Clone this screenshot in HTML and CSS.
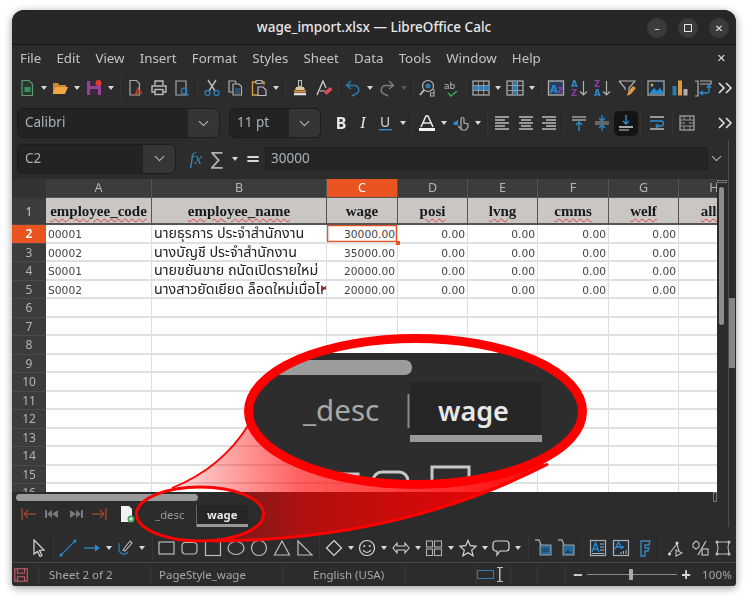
FILE: index.html
```html
<!DOCTYPE html>
<html lang="en">
<head>
<meta charset="utf-8">
<title>wage_import.xlsx — LibreOffice Calc</title>
<link rel="stylesheet" href="styles.css">
</head>
<body>
<svg class="defs" width="0" height="0">
<symbol id="new" viewBox="0 0 18 18"><path d="M4 1.500h7l3.500 3.500v11.500H4z" fill="#28382e" stroke="#5f9a72" stroke-width="1.200"/><rect x="6.500" y="8" width="6" height="5" fill="#37905a"/></symbol>
<symbol id="open" viewBox="0 0 18 18"><path d="M2 14V4h5l1.500 2H15v2H6z" fill="#c98a34"/><path d="M1.500 15l3-7H17l-3 7z" fill="#f3a645"/></symbol>
<symbol id="save" viewBox="0 0 18 18"><path d="M2 2h14v14H2z" fill="#9c3f9a"/><rect x="5" y="2" width="7" height="5" fill="#3b2a3b"/><rect x="5" y="10" width="8" height="6" fill="#3b2a3b"/><circle cx="13.500" cy="4" r="3" fill="#e23b2e"/></symbol>
<symbol id="pdf" viewBox="0 0 18 18"><path d="M4 1.500h6.500l3 3V16H4z" fill="none" stroke="#a8a8a8" stroke-width="1.200"/><path d="M8 17l3-5 1-3 1 3 3 2-5-.5z" fill="none" stroke="#c9402d" stroke-width="1.200"/></symbol>
<symbol id="print" viewBox="0 0 18 18"><path d="M5 6V2h8v4M5 13H2V7h14v6h-3" fill="none" stroke="#bcbcbc" stroke-width="1.400"/><rect x="5" y="10.500" width="8" height="5" fill="none" stroke="#bcbcbc" stroke-width="1.400"/></symbol>
<symbol id="prev" viewBox="0 0 18 18"><path d="M3 2h10v14H3z" fill="none" stroke="#a8a8a8" stroke-width="1.200"/><circle cx="11" cy="12" r="2.800" fill="none" stroke="#2a7cb6" stroke-width="1.400"/><path d="M13 14l2.500 2.500" stroke="#2a7cb6" stroke-width="1.500"/></symbol>
<symbol id="cut" viewBox="0 0 18 18"><path d="M5 1l7 11M13 1L6 12" stroke="#bcbcbc" stroke-width="1.400"/><circle cx="4.500" cy="14" r="2.500" fill="none" stroke="#2a7cb6" stroke-width="1.300"/><circle cx="13.500" cy="14" r="2.500" fill="none" stroke="#2a7cb6" stroke-width="1.300"/></symbol>
<symbol id="copy" viewBox="0 0 18 18"><path d="M3 2h6l1 1v10H3z" fill="#2c2c2c" stroke="#b0b0b0" stroke-width="1.200"/><path d="M7 5h6l2.500 2.500V16H7z" fill="#2c2c2c" stroke="#b0b0b0" stroke-width="1.200"/><path d="M9 10h5M9 12h5M9 14h5" stroke="#2a7cb6" stroke-width="1.100"/></symbol>
<symbol id="paste" viewBox="0 0 18 18"><path d="M6 3H2.500v13H8M12 3h2v3" fill="none" stroke="#d99a45" stroke-width="1.400"/><rect x="6" y="1.500" width="6" height="3" fill="none" stroke="#b0b0b0" stroke-width="1.100"/><path d="M8 8h5l3 3v5.500H8z" fill="none" stroke="#bcbcbc" stroke-width="1.200"/></symbol>
<symbol id="brush" viewBox="0 0 18 18"><rect x="7.500" y="1.500" width="3" height="6" fill="none" stroke="#bcbcbc" stroke-width="1.100"/><path d="M5 8h8l1 3H4z" fill="#e2c6a0"/><rect x="3" y="11.500" width="12" height="1.800" fill="#e0993f"/><rect x="3" y="13.800" width="12" height="2.500" fill="#dcdcdc"/></symbol>
<symbol id="clear" viewBox="0 0 18 18"><path d="M2 16L8 2l3 7" fill="none" stroke="#c8c8c8" stroke-width="1.400"/><path d="M5 12h5" stroke="#c8c8c8" stroke-width="1.200"/><path d="M9 13l6-5 2.500 2.500-6 5.500z" fill="#df4a58"/></symbol>
<symbol id="undo" viewBox="0 0 18 18"><path d="M3 6.500h8a4.500 4.500 0 0 1 2 8l-5 2.500M7 2L2.500 6.500 7 10" fill="none" stroke="#2a7cb6" stroke-width="1.400"/></symbol>
<symbol id="redo" viewBox="0 0 18 18"><path d="M15 6.500H7a4.500 4.500 0 0 0-2 8l5 2.500M11 2l4.500 4.500L11 10" fill="none" stroke="#7c7c7c" stroke-width="1.400"/></symbol>
<symbol id="find" viewBox="0 0 18 18"><circle cx="9" cy="7" r="5.500" fill="none" stroke="#bcbcbc" stroke-width="1.200"/><path d="M5 11l-4 5" stroke="#bcbcbc" stroke-width="1.800"/><circle cx="9" cy="7" r="2.500" fill="#2a7cb6"/><path d="M15 10v7h-3.500v-3H15" fill="none" stroke="#b0b0b0" stroke-width="1.100"/></symbol>
<symbol id="trow" viewBox="0 0 18 18"><rect x="1" y="2" width="16" height="14" fill="none" stroke="#a0a0a0" stroke-width="1.400"/><rect x="1.500" y="6.500" width="15" height="5" fill="#2a7cb6"/><path d="M6.300 2v14M11.600 2v14M1 6.500h16M1 11.500h16" stroke="#a0a0a0" stroke-width=".9"/></symbol>
<symbol id="tcol" viewBox="0 0 18 18"><rect x="1" y="2" width="16" height="14" fill="none" stroke="#a0a0a0" stroke-width="1.400"/><rect x="6.500" y="2.500" width="5" height="13" fill="#2a7cb6"/><path d="M6.300 2v14M11.600 2v14M1 6.500h16M1 11.500h16" stroke="#a0a0a0" stroke-width=".9"/></symbol>
<symbol id="filter" viewBox="0 0 18 18"><path d="M1 2h16l-6 7v3M7 11V9L1 2" fill="none" stroke="#b0b0b0" stroke-width="1.200"/><path d="M15 7l-5 6-1 4 4-2 5-6z" fill="#dd9a42"/></symbol>
<symbol id="img" viewBox="0 0 18 18"><rect x="1" y="2" width="16" height="14" fill="#1f2e3b" stroke="#b0b0b0" stroke-width="1.200"/><path d="M2 15l5-6 3 3 3-3 3 4v2z" fill="#2a8ad0"/><circle cx="5" cy="6" r="1.500" fill="#e0993f"/></symbol>
<symbol id="chart" viewBox="0 0 18 18"><rect x="1.500" y="7" width="4" height="9.500" fill="#2a7cb6"/><rect x="7" y="1.500" width="4" height="15" fill="#e0993f"/><rect x="12.500" y="10" width="4" height="6.500" fill="#b0b0b0"/></symbol>
<symbol id="pivot" viewBox="0 0 18 18"><path d="M1 2h3v15H1M6 2h11v3H6" fill="none" stroke="#b0b0b0" stroke-width="1.200"/><path d="M15 7v5a2 2 0 0 1-2 2H7M13 9l2-3 2 3M9 12l-3 2 3 2" fill="none" stroke="#2a8ad0" stroke-width="1.300"/></symbol>
<symbol id="more" viewBox="0 0 18 18"><path d="M3 4l5 5-5 5M10 4l5 5-5 5" fill="none" stroke="#d8d8d8" stroke-width="1.700"/></symbol>
<symbol id="fcol" viewBox="0 0 18 18"><path d="M3 13L8 2h2l5 11M5 9h8" fill="none" stroke="#e6e6e6" stroke-width="1.600"/><rect x="1" y="14" width="16" height="3" fill="#f2f2f2"/></symbol>
<symbol id="hl" viewBox="0 0 18 18"><path d="M1 9l5-3v5H2z" fill="#2a8ad0"/><path d="M9 15V5a1.500 1.500 0 0 1 3 0v4l4 1v3l-2 3H10l-4-4" fill="none" stroke="#b0b0b0" stroke-width="1.200"/></symbol>
<symbol id="al" viewBox="0 0 18 18"><path d="M2 3h14M2 6h10M2 9h14M2 12h10M2 15h14" stroke="#bcbcbc" stroke-width="1.400"/></symbol>
<symbol id="ac" viewBox="0 0 18 18"><path d="M2 3h14M4 6h10M2 9h14M4 12h10M2 15h14" stroke="#bcbcbc" stroke-width="1.400"/></symbol>
<symbol id="ar" viewBox="0 0 18 18"><path d="M2 3h14M6 6h10M2 9h14M6 12h10M2 15h14" stroke="#bcbcbc" stroke-width="1.400"/></symbol>
<symbol id="vt" viewBox="0 0 18 18"><path d="M2 3h14M2 6h14" stroke="#a0a0a0" stroke-width="1.300"/><path d="M9 8v9M6 11l3-3 3 3" fill="none" stroke="#2a8ad0" stroke-width="1.400"/></symbol>
<symbol id="vm" viewBox="0 0 18 18"><path d="M2 8h14M2 10h14" stroke="#a0a0a0" stroke-width="1.200"/><path d="M9 1v6M6 4l3 3 3-3M9 17v-6M6 14l3-3 3 3" fill="none" stroke="#2a8ad0" stroke-width="1.300"/></symbol>
<symbol id="vb" viewBox="0 0 18 18"><path d="M9 1v9M6 7l3 3 3-3" fill="none" stroke="#2a8ad0" stroke-width="1.400"/><path d="M2 13h14" stroke="#e6e6e6" stroke-width="1.400"/><path d="M2 16h10" stroke="#a0a0a0" stroke-width="1.300"/></symbol>
<symbol id="wrap" viewBox="0 0 18 18"><path d="M2 3h14M2 15h14" stroke="#bcbcbc" stroke-width="1.300"/><path d="M2 7h11a2 2 0 0 1 0 5H8M10 10l-2 2 2 2" fill="none" stroke="#2a8ad0" stroke-width="1.300"/></symbol>
<symbol id="merge" viewBox="0 0 18 18"><rect x="2" y="2" width="14" height="14" fill="none" stroke="#a0a0a0" stroke-width="1.300"/><path d="M2 6h14M2 12h14M6 2v4M12 2v4M6 12v4M12 12v4M2 9h5M11 9h5" stroke="#a0a0a0" stroke-width=".9"/></symbol>
<symbol id="cursor" viewBox="0 0 18 18"><path d="M4 1l10 10-4.500 .5 2.500 5-2 1-2.500-5L4 15z" fill="none" stroke="#d8d8d8" stroke-width="1.200"/></symbol>
<symbol id="line" viewBox="0 0 18 18"><path d="M2 16L16 2" stroke="#2a7cb6" stroke-width="1.300"/><circle cx="2" cy="16" r="1.600" fill="#2a8ad0"/><circle cx="16" cy="2" r="1.600" fill="#2a8ad0"/></symbol>
<symbol id="arrow" viewBox="0 0 18 18"><path d="M1 9h13" stroke="#2a7cb6" stroke-width="1.300"/><path d="M12 5.500L17 9l-5 3.500z" fill="#2a8ad0"/></symbol>
<symbol id="curve" viewBox="0 0 18 18"><path d="M3 4v7a5 5 0 0 0 9 2" fill="none" stroke="#2a7cb6" stroke-width="1.300"/><path d="M7 11l7-9 2 2-7 8z" fill="none" stroke="#bcbcbc" stroke-width="1.100"/></symbol>
<symbol id="rect" viewBox="0 0 18 18"><rect x="1" y="3" width="15" height="12" fill="none" stroke="#bcbcbc" stroke-width="1.200"/></symbol>
<symbol id="rrect" viewBox="0 0 18 18"><rect x="1" y="3.500" width="15" height="11.500" rx="3.500" fill="none" stroke="#bcbcbc" stroke-width="1.200"/></symbol>
<symbol id="sq" viewBox="0 0 18 18"><rect x="1.500" y="1.500" width="15" height="15" fill="none" stroke="#bcbcbc" stroke-width="1.200"/></symbol>
<symbol id="ell" viewBox="0 0 18 18"><ellipse cx="9" cy="9" rx="8" ry="6.500" fill="none" stroke="#bcbcbc" stroke-width="1.200"/></symbol>
<symbol id="circ" viewBox="0 0 18 18"><circle cx="9" cy="9" r="7.500" fill="none" stroke="#bcbcbc" stroke-width="1.200"/></symbol>
<symbol id="tri" viewBox="0 0 18 18"><path d="M9 2l7.500 14h-15z" fill="none" stroke="#bcbcbc" stroke-width="1.200"/></symbol>
<symbol id="rtri" viewBox="0 0 18 18"><path d="M2 2l14 14H2z" fill="none" stroke="#bcbcbc" stroke-width="1.200"/></symbol>
<symbol id="dia" viewBox="0 0 18 18"><path d="M9 1.500L16.500 9 9 16.500 1.500 9z" fill="none" stroke="#d8d8d8" stroke-width="1.200"/></symbol>
<symbol id="smile" viewBox="0 0 18 18"><circle cx="9" cy="9" r="7.500" fill="none" stroke="#d8d8d8" stroke-width="1.200"/><circle cx="6.300" cy="7" r="1" fill="#d8d8d8"/><circle cx="11.700" cy="7" r="1" fill="#d8d8d8"/><path d="M5 11a4.500 4.500 0 0 0 8 0" fill="none" stroke="#d8d8d8" stroke-width="1.100"/></symbol>
<symbol id="dbl" viewBox="0 0 18 18"><path d="M5 4L1 9l4 5v-3h8v3l4-5-4-5v3H5z" fill="none" stroke="#d0d0d0" stroke-width="1.100"/></symbol>
<symbol id="flow" viewBox="0 0 18 18"><rect x="1.500" y="2" width="6" height="6" fill="none" stroke="#b0b0b0" stroke-width="1.100"/><rect x="9.500" y="2" width="7" height="6" fill="none" stroke="#b0b0b0" stroke-width="1.100"/><rect x="1.500" y="10" width="6" height="6.500" fill="none" stroke="#b0b0b0" stroke-width="1.100"/><rect x="9.500" y="10" width="7" height="6.500" fill="none" stroke="#b0b0b0" stroke-width="1.100"/></symbol>
<symbol id="star" viewBox="0 0 18 18"><path d="M9 1.500l2.300 5.200 5.700.6-4.300 3.800 1.300 5.600L9 13.800l-5 2.900 1.300-5.600L1 7.300l5.700-.6z" fill="none" stroke="#d8d8d8" stroke-width="1.200"/></symbol>
<symbol id="call" viewBox="0 0 18 18"><path d="M4 2h10a3 3 0 0 1 3 3v4a3 3 0 0 1-3 3H8l-3 4v-4H4a3 3 0 0 1-3-3V5a3 3 0 0 1 3-3z" fill="none" stroke="#d8d8d8" stroke-width="1.200"/></symbol>
<symbol id="fl1" viewBox="0 0 18 18"><path d="M1 1h4l2 5v8" fill="none" stroke="#a0a0a0" stroke-width="1.400"/><rect x="6" y="6" width="11" height="10" fill="#24689a" stroke="#a0a0a0"/><path d="M8 10h7M8 12h7" stroke="#1b3a54" stroke-width="1"/></symbol>
<symbol id="fl2" viewBox="0 0 18 18"><path d="M1 1h4l2 5v8" fill="none" stroke="#a0a0a0" stroke-width="1.400"/><rect x="6" y="6" width="11" height="10" fill="#24689a" stroke="#a0a0a0"/><path d="M8 14l3-3 3 3z" fill="#1b3a54"/></symbol>
<symbol id="tb1" viewBox="0 0 18 18"><rect x="1.500" y="1.500" width="15" height="15" fill="#232f3a" stroke="#b0b0b0" stroke-width="1.200"/><path d="M3 13L6.500 4 10 13M4.500 10h4" fill="none" stroke="#2a8ad0" stroke-width="1.400"/><path d="M11 5h4M11 8h4M11 11h4M3 14.500h12" stroke="#b0b0b0"/></symbol>
<symbol id="tb2" viewBox="0 0 18 18"><rect x="1.500" y="1.500" width="15" height="15" fill="#232f3a" stroke="#b0b0b0" stroke-width="1.200"/><path d="M3 10L6.500 3 10 10M4 8h8" fill="none" stroke="#2a8ad0" stroke-width="1.400"/><path d="M9 15v-2M11.500 15v-3M14 15v-4" stroke="#b0b0b0"/></symbol>
<symbol id="font3" viewBox="0 0 18 18"><path d="M5 17V2h9l-1 4H9v3h4l-1 3H9v5z" fill="none" stroke="#3a86bb" stroke-width="1.400"/></symbol>
<symbol id="pts" viewBox="0 0 18 18"><path d="M2 15l8-10 2 7" fill="none" stroke="#bcbcbc" stroke-width="1.100"/><path d="M9 11l6 3-6 3z" fill="none" stroke="#bcbcbc" stroke-width="1.100"/><circle cx="2.500" cy="15" r="1.500" fill="#d8d8d8"/><circle cx="10" cy="4" r="1.500" fill="#d8d8d8"/></symbol>
<symbol id="pct" viewBox="0 0 18 18"><path d="M2 5l3-3 3 2v4l-3 2-3-2z" fill="none" stroke="#bcbcbc" stroke-width="1.100"/><path d="M15 2L7 16" stroke="#bcbcbc" stroke-width="1.300"/><rect x="11" y="10" width="6" height="6" fill="none" stroke="#bcbcbc" stroke-width="1.200"/></symbol>
<symbol id="box3" viewBox="0 0 18 18"><path d="M3 3h12l-1 5 1 7H3l1-6z" fill="none" stroke="#bcbcbc" stroke-width="1.100"/><circle cx="3" cy="3" r="1.500" fill="#bcbcbc"/><circle cx="15" cy="3" r="1.500" fill="#bcbcbc"/><circle cx="3" cy="15" r="1.500" fill="#bcbcbc"/><circle cx="15" cy="15" r="1.500" fill="#bcbcbc"/></symbol>
<symbol id="first" viewBox="0 0 18 18"><path d="M2 3v12" stroke="#96452c" stroke-width="1.400"/><path d="M16 9H4M8 5L4 9l4 4" fill="none" stroke="#96452c" stroke-width="1.400"/></symbol>
<symbol id="last" viewBox="0 0 18 18"><path d="M16 3v12" stroke="#96452c" stroke-width="1.400"/><path d="M2 9h12M10 5l4 4-4 4" fill="none" stroke="#96452c" stroke-width="1.400"/></symbol>
<symbol id="pv" viewBox="0 0 18 18"><path d="M2 5v8h2V5zM9 5L4 9l5 4zM15 5L9 9l6 4z" fill="#777"/></symbol>
<symbol id="nx" viewBox="0 0 18 18"><path d="M16 5v8h-2V5zM9 5l5 4-5 4zM3 5l6 4-6 4z" fill="#777"/></symbol>
<symbol id="nsheet" viewBox="0 0 18 18"><path d="M3 1h8l3 3v13H3z" fill="#f2f2f2"/><circle cx="13" cy="14" r="3.500" fill="#3fa35f"/><path d="M11 14h4M13 12v4" stroke="#fff" stroke-width="1"/></symbol>
<symbol id="fsave" viewBox="0 0 18 18"><path d="M2 2h14v14H2z" fill="#3a2a2c" stroke="#c8636e" stroke-width="1.200"/><path d="M5 2v5h8V2M5 16v-5h8v5" fill="none" stroke="#c8636e" stroke-width="1.100"/></symbol>
</svg>

<div class="window">
  <header class="title">
    <span class="title-text">wage_import.xlsx — LibreOffice Calc</span>
    <div class="wbtns">
      <span class="wbtn">–</span>
      <span class="wbtn"><span class="sq-glyph"></span></span>
      <span class="wbtn">✕</span>
    </div>
  </header>
  <nav class="menu">
    <span>File</span><span>Edit</span><span>View</span><span>Insert</span><span>Format</span><span>Styles</span><span>Sheet</span><span>Data</span><span>Tools</span><span>Window</span><span>Help</span>
    <span class="menu-x">✕</span>
  </nav>

  <div class="tb tb-std">
    <svg class="i"><use href="#new"/></svg><i class="a"></i>
    <svg class="i"><use href="#open"/></svg><i class="a"></i>
    <svg class="i"><use href="#save"/></svg><i class="a"></i><b class="s"></b>
    <svg class="i"><use href="#pdf"/></svg><svg class="i"><use href="#print"/></svg><svg class="i"><use href="#prev"/></svg><b class="s"></b>
    <svg class="i"><use href="#cut"/></svg><svg class="i"><use href="#copy"/></svg><svg class="i"><use href="#paste"/></svg><i class="a"></i><b class="s"></b>
    <svg class="i"><use href="#brush"/></svg><svg class="i"><use href="#clear"/></svg><b class="s"></b>
    <svg class="i"><use href="#undo"/></svg><i class="a"></i>
    <svg class="i"><use href="#redo"/></svg><i class="a off"></i><b class="s"></b>
    <svg class="i"><use href="#find"/></svg>
    <svg class="i" viewBox="0 0 18 18"><text x="1" y="10" class="ic-t">ab</text><path d="M5 14l3 3 6-5" fill="none" stroke="#3fa35f" stroke-width="1.500"/></svg><b class="s"></b>
    <svg class="i"><use href="#trow"/></svg><i class="a"></i>
    <svg class="i"><use href="#tcol"/></svg><i class="a"></i><b class="s"></b>
    <svg class="i" viewBox="0 0 18 18"><rect x="1.500" y="2" width="15" height="14" fill="#243f57" stroke="#a8a8a8" stroke-width="1.400"/><text x="3" y="14" class="ic-az">A</text><text x="10" y="14" class="ic-az ic-p">z</text></svg>
    <svg class="i" viewBox="0 0 18 18"><text x="0" y="8" class="ic-s ic-b">A</text><text x="0" y="17" class="ic-s ic-p">Z</text><path d="M12.500 2v14M9 12.500l3.500 3.500 3.500-3.500" fill="none" stroke="#b0b0b0" stroke-width="1.200"/></svg>
    <svg class="i" viewBox="0 0 18 18"><text x="0" y="8" class="ic-s ic-p">Z</text><text x="0" y="17" class="ic-s ic-b">A</text><path d="M12.500 2v14M9 12.500l3.500 3.500 3.500-3.500" fill="none" stroke="#b0b0b0" stroke-width="1.200"/></svg>
    <svg class="i"><use href="#filter"/></svg><b class="s"></b>
    <svg class="i"><use href="#img"/></svg><svg class="i"><use href="#chart"/></svg><svg class="i"><use href="#pivot"/></svg>
    <svg class="i end"><use href="#more"/></svg>
  </div>

  <div class="tb tb-font">
    <div class="combo combo-font"><span class="combo-v">Calibri</span><span class="combo-b"><i class="chev"></i></span></div>
    <div class="combo combo-size"><span class="combo-v">11 pt</span><span class="combo-b"><i class="chev"></i></span></div>
    <span class="gl gl-b">B</span><span class="gl gl-i">I</span>
    <svg class="i" viewBox="0 0 18 18"><text x="3" y="13" class="ic-u">U</text><rect x="2" y="15" width="13" height="1.400" fill="#2a8ad0"/></svg><i class="a"></i><b class="s"></b>
    <svg class="i"><use href="#fcol"/></svg><i class="a"></i>
    <svg class="i"><use href="#hl"/></svg><i class="a"></i><b class="s"></b>
    <svg class="i"><use href="#al"/></svg><svg class="i"><use href="#ac"/></svg><svg class="i"><use href="#ar"/></svg><b class="s"></b>
    <svg class="i"><use href="#vt"/></svg><svg class="i"><use href="#vm"/></svg>
    <span class="active"><svg class="i"><use href="#vb"/></svg></span><b class="s s-w"></b>
    <svg class="i"><use href="#wrap"/></svg><b class="s"></b><svg class="i"><use href="#merge"/></svg>
    <svg class="i end"><use href="#more"/></svg>
  </div>

  <div class="tb tb-formula">
    <div class="combo combo-name"><span class="combo-v">C2</span><span class="combo-b"><i class="chev"></i></span></div>
    <span class="fx">fx</span><span class="sigma">∑</span><i class="a"></i><span class="eq">=</span>
    <div class="input">30000</div>
    <i class="chev chev-input"></i>
  </div>

  <main class="sheet">
    <div class="grid">
      <div class="row row-col">
        <div class="rh"></div><div class="ch">A</div><div class="ch">B</div><div class="ch ch-on">C</div><div class="ch">D</div><div class="ch">E</div><div class="ch">F</div><div class="ch">G</div><div class="ch">H</div>
      </div>
      <div class="row row-head">
        <div class="rh">1</div>
        <div class="hc"><u>employee_code</u></div><div class="hc"><u>employee_name</u></div><div class="hc">wage</div><div class="hc"><u>posi</u></div><div class="hc"><u>lvng</u></div><div class="hc"><u>cmms</u></div><div class="hc"><u>welf</u></div><div class="hc"><u>allw</u></div>
      </div>
      <div class="row">
        <div class="rh rh-on">2</div><div class="c">00001</div><div class="c th">นายธุรการ ประจำสำนักงาน</div><div class="c n sel">30000.00</div><div class="c n">0.00</div><div class="c n">0.00</div><div class="c n">0.00</div><div class="c n">0.00</div><div class="c"></div>
      </div>
      <div class="row">
        <div class="rh">3</div><div class="c">00002</div><div class="c th">นางบัญชี ประจำสำนักงาน</div><div class="c n">35000.00</div><div class="c n">0.00</div><div class="c n">0.00</div><div class="c n">0.00</div><div class="c n">0.00</div><div class="c"></div>
      </div>
      <div class="row">
        <div class="rh">4</div><div class="c">S0001</div><div class="c th">นายขยันขาย ถนัดเปิดรายใหม่</div><div class="c n">20000.00</div><div class="c n">0.00</div><div class="c n">0.00</div><div class="c n">0.00</div><div class="c n">0.00</div><div class="c"></div>
      </div>
      <div class="row">
        <div class="rh">5</div><div class="c">S0002</div><div class="c th ovf">นางสาวยัดเยียด ล็อดใหม่เมื่อไหร่</div><div class="c n">20000.00</div><div class="c n">0.00</div><div class="c n">0.00</div><div class="c n">0.00</div><div class="c n">0.00</div><div class="c"></div>
      </div>
      <div class="row"><div class="rh">6</div><div class="c"></div><div class="c"></div><div class="c"></div><div class="c"></div><div class="c"></div><div class="c"></div><div class="c"></div><div class="c"></div></div>
      <div class="row"><div class="rh">7</div><div class="c"></div><div class="c"></div><div class="c"></div><div class="c"></div><div class="c"></div><div class="c"></div><div class="c"></div><div class="c"></div></div>
      <div class="row"><div class="rh">8</div><div class="c"></div><div class="c"></div><div class="c"></div><div class="c"></div><div class="c"></div><div class="c"></div><div class="c"></div><div class="c"></div></div>
      <div class="row"><div class="rh">9</div><div class="c"></div><div class="c"></div><div class="c"></div><div class="c"></div><div class="c"></div><div class="c"></div><div class="c"></div><div class="c"></div></div>
      <div class="row"><div class="rh">10</div><div class="c"></div><div class="c"></div><div class="c"></div><div class="c"></div><div class="c"></div><div class="c"></div><div class="c"></div><div class="c"></div></div>
      <div class="row"><div class="rh">11</div><div class="c"></div><div class="c"></div><div class="c"></div><div class="c"></div><div class="c"></div><div class="c"></div><div class="c"></div><div class="c"></div></div>
      <div class="row"><div class="rh">12</div><div class="c"></div><div class="c"></div><div class="c"></div><div class="c"></div><div class="c"></div><div class="c"></div><div class="c"></div><div class="c"></div></div>
      <div class="row"><div class="rh">13</div><div class="c"></div><div class="c"></div><div class="c"></div><div class="c"></div><div class="c"></div><div class="c"></div><div class="c"></div><div class="c"></div></div>
      <div class="row"><div class="rh">14</div><div class="c"></div><div class="c"></div><div class="c"></div><div class="c"></div><div class="c"></div><div class="c"></div><div class="c"></div><div class="c"></div></div>
      <div class="row"><div class="rh">15</div><div class="c"></div><div class="c"></div><div class="c"></div><div class="c"></div><div class="c"></div><div class="c"></div><div class="c"></div><div class="c"></div></div>
      <div class="row"><div class="rh">16</div><div class="c"></div><div class="c"></div><div class="c"></div><div class="c"></div><div class="c"></div><div class="c"></div><div class="c"></div><div class="c"></div></div>
    </div>
    <div class="vscroll"><span class="vgrip"></span><span class="vthumb"></span></div>
    <div class="deck"><span class="deck-grip"></span></div>
  </main>

  <div class="tabs">
    <div class="hscroll"><span class="hthumb"></span><span class="hgrip"></span></div>
    <div class="tab-row">
      <svg class="i"><use href="#first"/></svg><svg class="i"><use href="#pv"/></svg><svg class="i"><use href="#nx"/></svg><svg class="i"><use href="#last"/></svg>
      <svg class="i i-new"><use href="#nsheet"/></svg>
      <span class="tab">_desc</span><span class="tab tab-on">wage</span>
    </div>
  </div>

  <div class="tb tb-draw">
    <svg class="i"><use href="#cursor"/></svg><b class="s"></b>
    <svg class="i"><use href="#line"/></svg><svg class="i"><use href="#arrow"/></svg><i class="a"></i>
    <svg class="i"><use href="#curve"/></svg><i class="a"></i><b class="s"></b>
    <svg class="i sh"><use href="#rect"/></svg><svg class="i sh"><use href="#rrect"/></svg><svg class="i sh"><use href="#sq"/></svg><svg class="i sh"><use href="#ell"/></svg><svg class="i sh"><use href="#circ"/></svg><svg class="i sh"><use href="#tri"/></svg><svg class="i sh"><use href="#rtri"/></svg><b class="s"></b>
    <svg class="i"><use href="#dia"/></svg><i class="a"></i>
    <svg class="i"><use href="#smile"/></svg><i class="a"></i>
    <svg class="i"><use href="#dbl"/></svg><i class="a"></i>
    <svg class="i"><use href="#flow"/></svg><i class="a"></i>
    <svg class="i"><use href="#star"/></svg><i class="a"></i>
    <svg class="i"><use href="#call"/></svg><i class="a"></i><b class="s"></b>
    <svg class="i"><use href="#fl1"/></svg><svg class="i"><use href="#fl2"/></svg><b class="s s-w"></b>
    <svg class="i"><use href="#tb1"/></svg><svg class="i"><use href="#tb2"/></svg><svg class="i"><use href="#font3"/></svg><b class="s s-w"></b>
    <svg class="i"><use href="#pts"/></svg><svg class="i"><use href="#pct"/></svg><svg class="i"><use href="#box3"/></svg>
  </div>

  <footer class="status">
    <div class="st st-save"><svg class="i-st"><use href="#fsave"/></svg></div>
    <div class="st st-sheet">Sheet 2 of 2</div>
    <div class="st st-page">PageStyle_wage</div>
    <div class="st st-lang">English (USA)</div>
    <div class="st st-a"></div>
    <div class="st st-sel"><span class="selrect"></span><span class="ibeam"></span></div>
    <div class="st st-b"></div>
    <div class="st st-c"></div>
    <div class="st st-zoom"><span class="zm">−</span><span class="slider"><span class="knob"></span></span><span class="zm">+</span></div>
    <div class="st st-pct">100%</div>
  </footer>
</div>

<svg class="callout" width="748" height="600" viewBox="0 0 748 600">
  <defs>
    <linearGradient id="wg" gradientUnits="userSpaceOnUse" x1="170" y1="0" x2="560" y2="0">
      <stop offset="0" stop-color="#f00" stop-opacity=".12"/>
      <stop offset=".33" stop-color="#f00" stop-opacity=".62"/>
      <stop offset=".7" stop-color="#f00" stop-opacity=".82"/>
      <stop offset="1" stop-color="#f00" stop-opacity="1"/>
    </linearGradient>
    <mask id="hole" maskUnits="userSpaceOnUse" x="0" y="0" width="748" height="600">
      <rect width="748" height="600" fill="#fff"/>
      <ellipse cx="200" cy="514" rx="63.500" ry="27" fill="#000"/>
    </mask>
    <clipPath id="lens"><ellipse cx="415.500" cy="411.500" rx="167" ry="73"/></clipPath>
  </defs>
  <g mask="url(#hole)">
    <path d="M249 424 Q222 468 172 488 L200 510 L214 541 Q400 540 548 464 Z" fill="url(#wg)"/>
    <path d="M249 424 Q222 468 172 488" fill="none" stroke="#f00" stroke-width="1.800"/>
    <path d="M214 541 Q400 540 548 464" fill="none" stroke="#f00" stroke-width="3"/>
  </g>
  <ellipse cx="200" cy="514" rx="63.500" ry="27" fill="none" stroke="#f00" stroke-width="3"/>
  <g clip-path="url(#lens)">
    <rect x="240" y="330" width="350" height="165" fill="#fff"/>
    <rect x="240" y="353" width="350" height="140" fill="#2d2d2d"/>
    <rect x="230" y="360" width="182" height="15" rx="7" fill="#9c9c9c"/>
    <rect x="410" y="382" width="132" height="60" fill="#262626"/>
    <rect x="407.500" y="394" width="2" height="34" fill="#8a8a8a"/>
    <rect x="410" y="435" width="132" height="7" fill="#9a9a9a"/>
    <text x="303" y="421" class="lens-d">_desc</text>
    <text x="438" y="421" class="lens-w">wage</text>
    <rect x="322" y="474" width="36" height="30" fill="none" stroke="#c8c8c8" stroke-width="3"/>
    <rect x="373" y="472" width="35" height="30" rx="9" fill="none" stroke="#c8c8c8" stroke-width="3"/>
    <rect x="432" y="467" width="37" height="36" fill="none" stroke="#c8c8c8" stroke-width="3"/>
  </g>
  <ellipse cx="415.500" cy="411.500" rx="167" ry="73" fill="none" stroke="#f00" stroke-width="9"/>
</svg>
</body>
</html>
```
FILE: styles.css
```css
* { box-sizing: border-box; }
html, body { margin: 0; padding: 0; background: #fff; }
body { width: 748px; height: 600px; overflow: hidden; position: relative; padding: 10px 12px 14px; font-family: "Noto Sans", "DejaVu Sans", sans-serif; }
.defs { position: absolute; }
.ic-t { font: 9px "DejaVu Sans", sans-serif; fill: #bcbcbc; }
.ic-az { font: bold 10px "DejaVu Sans", sans-serif; fill: #2a8ad0; }
.ic-s { font: bold 8.500px "DejaVu Sans", sans-serif; }
.ic-b { fill: #2a8ad0; }
.ic-p { fill: #8a3ea6; }
.ic-u { font: 14px "Noto Sans", sans-serif; fill: #d8d8d8; }

.window { width: 724px; height: 576px; background: #2c2c2c; border-radius: 12px 12px 3px 3px; box-shadow: 0 2px 9px rgba(0,0,0,.4); display: flex; flex-direction: column; position: relative; overflow: hidden; filter: blur(.35px); }

.title { height: 35px; flex: none; background: #272727; border-bottom: 1px solid #141414; display: flex; align-items: center; justify-content: center; position: relative; }
.title-text { color: #e8e8e8; font-size: 13.500px; font-weight: 500; }
.wbtns { position: absolute; right: 7px; top: 8px; display: flex; gap: 11px; }
.wbtn { width: 20px; height: 20px; border-radius: 50%; background: #3b3b3b; color: #e4e4e4; font-size: 10px; display: flex; align-items: center; justify-content: center; }
.sq-glyph { width: 8px; height: 8px; border: 1.300px solid #e4e4e4; }

.menu { height: 25px; flex: none; display: flex; align-items: center; padding-left: 8px; gap: 15.200px; color: #c4c4c4; font-size: 13.300px; }
.menu-x { margin-left: auto; margin-right: 10px; font-size: 11px; color: #e0e0e0; }

.tb { flex: none; display: flex; align-items: center; }
.tb-std { height: 35px; padding-left: 3px; }
.tb-font { height: 36px; padding-left: 5px; }
.tb-formula { height: 35px; padding-left: 5px; }
.tb-draw { height: 29px; padding-left: 15px; }
.i { width: 18px; height: 18px; margin: 0 2.750px; flex: none; display: block; }
.i.sh { margin: 0 2.500px; }
.end { margin-left: auto; margin-right: 2px; }
.a { width: 10px; height: 18px; flex: none; display: flex; align-items: center; justify-content: center; }
.a::after { content: ""; border: 3.500px solid transparent; border-top: 4px solid #d8d8d8; border-bottom: 0; }
.a.off::after { border-top-color: #5c5c5c; }
.s { width: 1px; height: 24px; background: #353535; margin: 0 2.500px; flex: none; }
.a + .s { margin-left: 4.500px; }
.s-w { margin: 0 3.500px; }
.tb-font .s-w { margin: 0 4.500px 0 2.500px; }

.combo { height: 30px; background: #232323; border: 1px solid #1c1c1c; border-radius: 6px; display: flex; overflow: hidden; flex: none; color: #a9b2bb; font-size: 13.500px; }
.combo-v { flex: 1; padding-left: 7px; line-height: 27px; }
.combo-b { background: #353535; display: flex; align-items: center; justify-content: center; }
.combo-font { width: 203px; margin-right: 9px; }
.combo-font .combo-b { width: 31px; }
.combo-size { width: 92px; margin-right: 9px; }
.combo-size .combo-b { width: 31px; }
.combo-name { width: 159px; margin-right: 9px; }
.combo-name .combo-b { width: 32px; }
.chev { width: 7px; height: 7px; border-right: 1.300px solid #b8b8b8; border-bottom: 1.300px solid #b8b8b8; transform: rotate(45deg) translate(-1.500px,-1.500px); display: block; }
.chev-input { margin-left: 5px; }
.gl { width: 22px; text-align: center; color: #e8e8e8; flex: none; }
.gl-b { font: bold 16px "Noto Sans", sans-serif; }
.gl-i { font: italic 16px "Liberation Serif", serif; }
.active { background: #141414; border-radius: 5px; width: 23.500px; height: 25px; display: flex; align-items: center; justify-content: center; flex: none; }

.fx { font: italic 17px "Liberation Serif", serif; color: #3a86bb; width: 22px; text-align: center; flex: none; }
.sigma { font: 18px "DejaVu Sans", sans-serif; color: #b0b0b0; width: 20px; margin-right: 3px; text-align: center; flex: none; }
.eq { font: bold 18px "DejaVu Sans", sans-serif; color: #d8d8d8; width: 20px; text-align: center; flex: none; margin-left: 3px; }
.input { width: 443px; height: 23px; margin-left: 2px; background: #252525; border: 1px solid #1f1f1f; color: #a9b2bb; font-size: 13.500px; line-height: 21px; padding-left: 5px; flex: none; }

.sheet { flex: 1; min-height: 0; display: flex; padding: 3px 0 0 0; position: relative; }
.grid { width: 705px; flex: none; overflow: hidden; background: #fff; }
.row { display: grid; grid-template-columns: 34px 106px 175px 71px 70px 70px 71px 70px 71px; grid-template-rows: minmax(0, 1fr); width: 738px; height: 18px; }
.row:nth-child(odd) { height: 19px; }
.row.row-col { height: 19px; }
.row.row-head { height: 27px; }
.rh { background: #3c3c3c; color: #b4b4b4; font-size: 12px; text-align: center; line-height: 18px; border-bottom: 1px solid #4a4a4a; overflow: hidden; min-height: 0; }
.row-col .rh { background: #333; border: 0; }
.row-head .rh { line-height: 27px; font-weight: 500; }
.rh-on { background: #e95420; color: #fff; font-weight: 600; }
.ch { background: #3c3c3c; color: #b4b4b4; font-size: 12.500px; text-align: center; line-height: 18px; border-right: 1.500px solid #555; border-bottom: 1px solid #555; overflow: hidden; min-height: 0; }
.ch-on { background: #e95420; color: #fff; }
.hc { background: #cac6c4; border-right: 1.500px solid #555; border-bottom: 2px solid #555; font: bold 15px/26px "Liberation Serif", serif; color: #1a1a1a; text-align: center; overflow: hidden; white-space: nowrap; min-height: 0; }
.hc u { text-decoration: underline wavy #e04040 1px; text-underline-offset: 2px; }
.c { background: #fff; border-right: 1.500px solid #ddd; border-bottom: 2px solid #e0e0e0; font: 10.700px/19px "DejaVu Sans", sans-serif; color: #444; padding: 0 2px; overflow: hidden; white-space: nowrap; position: relative; min-height: 0; }
.n { text-align: right; }
.th { font: 14.300px/18px "Noto Sans Thai", "Noto Sans", "DejaVu Sans", sans-serif; color: #222; }
.sel { box-shadow: inset 0 0 0 1.300px #e95420; overflow: visible; z-index: 1; }
.sel::after { content: ""; position: absolute; right: -3px; bottom: -3px; width: 4.500px; height: 4.500px; background: #e95420; }
.ovf::after { content: ""; position: absolute; right: 1px; top: 4px; border: 3.500px solid transparent; border-left: 4px solid #c81e1e; border-right: 0; }

.vscroll { flex: 1; position: relative; }
.vgrip { position: absolute; left: 0; top: 1px; width: 10px; height: 3px; border: 1px solid #777; }
.vthumb { position: absolute; left: 2px; top: 8px; width: 5px; height: 138px; background: #8e8e8e; border-radius: 3px; }
.deck { position: absolute; right: 7px; top: -36px; width: 1px; height: 387px; background: #4e4e4e; }
.deck-grip { position: absolute; left: 1px; top: 158px; width: 6px; height: 70px; background: #868686; }

.tabs { flex: none; height: 41px; }
.hscroll { height: 12px; padding: 2px 0 0 4px; position: relative; }
.hthumb { display: block; width: 182px; height: 7px; background: #9a9a9a; border-radius: 4px; }
.hgrip { position: absolute; left: 701px; top: 0; width: 4px; height: 10px; border: 1px solid #777; }
.tab-row { height: 24px; display: flex; align-items: center; padding-left: 5px; }
.tab-row .i { margin-top: -4px; }
.i-new { margin-left: 7px; }
.tab { width: 58px; height: 22px; color: #9c9c9c; font-size: 11.300px; line-height: 19px; text-align: center; padding-left: 5px; flex: none; border-right: 1px solid #666; }
.tab-on { width: 51px; padding-left: 0; background: #262626; color: #e6e6e6; font-weight: 700; border-right: 0; border-bottom: 3px solid #989898; }

.status { flex: none; height: 24px; border-top: 1px solid #454545; display: flex; align-items: center; color: #a8a8a8; font-size: 11.500px; }
.st { height: 18px; line-height: 18px; border-right: 1px solid #383838; flex: none; display: flex; align-items: center; }
.st-save { width: 27px; padding-left: 1px; }
.i-st { width: 16px; height: 16px; margin-left: 0; }
.st-sheet { width: 112px; padding-left: 10px; }
.st-page { width: 132px; padding-left: 8px; }
.st-lang { width: 123px; padding-left: 30px; }
.st-a { width: 71px; }
.st-sel { width: 34px; padding-left: 0; gap: 3px; }
.selrect { width: 17px; height: 9px; border: 1.500px solid #2a7cb6; }
.ibeam { width: 6px; height: 15px; border-top: 1px solid #bbb; border-bottom: 1px solid #bbb; background: linear-gradient(#bbb,#bbb) center / 1.500px 100% no-repeat; }
.st-b { width: 27px; }
.st-c { width: 28px; }
.st-zoom { width: 130px; padding-left: 6px; gap: 3px; border-right: 0; }
.zm { width: 12px; text-align: center; font-size: 17px; font-weight: 700; color: #d8d8d8; }
.slider { width: 90px; height: 1.500px; background: #8a8a8a; position: relative; }
.knob { position: absolute; left: 42px; top: -5px; width: 4px; height: 11px; background: #aaa; border-radius: 1px; }
.st-pct { border: 0; padding-left: 6px; letter-spacing: .2px; }

.callout { position: absolute; left: 0; top: 0; pointer-events: none; filter: blur(.3px); }
.lens-d { font: 29.500px "Noto Sans", sans-serif; fill: #a8a8a8; }
.lens-w { font: 600 27px "Noto Sans", sans-serif; fill: #e8e8e8; }
```
